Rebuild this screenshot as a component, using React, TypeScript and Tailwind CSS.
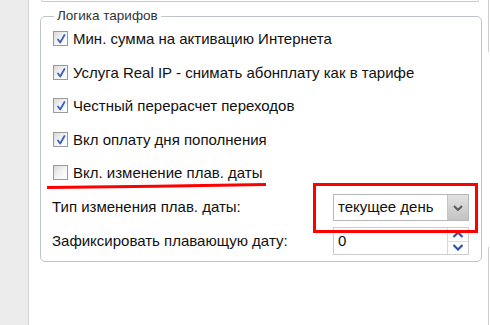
import React from "react";

const font = { fontFamily: '"Liberation Sans", Arial, sans-serif' };

function Check({ checked }: { checked: boolean }) {
  return (
    <span className="relative inline-block w-[15px] h-[15px] border border-[#9a9a9a] bg-gradient-to-br from-[#d9d9d9] via-[#f4f4f4] to-[#ffffff] shrink-0">
      {checked && (
        <svg className="absolute left-[1px] top-[1px]" width="12" height="12" viewBox="0 0 12 12">
          <path d="M3 6.5 L5.2 9.5 L9.5 2" fill="none" stroke="#3f5fbf" strokeWidth="1.8" strokeLinecap="round" strokeLinejoin="round" />
        </svg>
      )}
    </span>
  );
}

const rows = [
  { label: "Мин. сумма на активацию Интернета", checked: true },
  { label: "Услуга Real IP - снимать абонплату как в тарифе", checked: true },
  { label: "Честный перерасчет переходов", checked: true },
  { label: "Вкл оплату дня пополнения", checked: true },
  { label: "Вкл. изменение плав. даты", checked: false },
];

export default function App() {
  return (
    <div className="relative w-[490px] h-[325px] overflow-hidden bg-white flex text-[#111]" style={font}>
      <div className="w-[29px] h-full bg-[#ececec] border-r border-[#d4d4d4] shrink-0" />
      <div className="relative flex-1">
        {/* bottom of panel above */}
        <div className="ml-[12px] mr-[11px] h-[2px] border-b border-l border-r border-[#c6c8d4] rounded-b-[4px]" />

        <fieldset className="mt-[7px] ml-[11px] w-[442px] h-[253px] border border-[#bfc2cf] rounded-[5px] px-[12px] pb-0 pt-0">
          <legend className="ml-[1px] px-[3px] text-[13.5px] text-[#333] leading-[14px]">Логика тарифов</legend>
          <div className="flex flex-col gap-[18.5px] mt-[8px]">
            {rows.map((r) => (
              <div key={r.label} className="flex items-center gap-[5px] h-[15px] text-[15px]">
                <Check checked={r.checked} />
                <span className="leading-[15px]">{r.label}</span>
              </div>
            ))}
          </div>
          <div className="mt-[14px] flex items-center justify-between h-[27px] text-[15px]">
            <span className="ml-[-1px]">Тип изменения плав. даты:</span>
            <div className="flex w-[136px] h-[27px] border border-[#b7b7b7] mr-[0px]">
              <span className="flex-1 flex items-center pl-[4px] text-[15px]">текущее день</span>
              <span className="w-[21px] h-full border-l border-[#c4c4c4] bg-gradient-to-b from-[#e2e2e2] to-[#c3c3c3] flex items-center justify-center">
                <svg width="10" height="6" viewBox="0 0 10 6">
                  <path d="M1 1 L5 5 L9 1" fill="none" stroke="#5a5a5a" strokeWidth="2" />
                </svg>
              </span>
            </div>
          </div>
          <div className="mt-[6px] flex items-center justify-between h-[28px] text-[15px]">
            <span className="ml-[-1px]">Зафиксировать плавающую дату:</span>
            <div className="flex w-[136px] h-[28px] border border-[#cdcdcd]">
              <span className="flex-1 pl-[4px] pt-[2px] text-[15px]">0</span>
              <span className="w-[21px] h-full border-l border-[#d8d8d8] flex flex-col">
                <span className="flex-1 flex items-center justify-center border-b border-[#e0e0e0]">
                  <svg width="12" height="7" viewBox="0 0 12 7">
                    <path d="M1.5 6 L6 1.5 L10.5 6" fill="none" stroke="#2f52a8" strokeWidth="2.2" />
                  </svg>
                </span>
                <span className="flex-1 flex items-center justify-center">
                  <svg width="12" height="7" viewBox="0 0 12 7">
                    <path d="M1.5 1 L6 5.5 L10.5 1" fill="none" stroke="#2f52a8" strokeWidth="2.2" />
                  </svg>
                </span>
              </span>
            </div>
          </div>
        </fieldset>

        {/* right-side panel edges */}
        <div className="absolute right-[1px] top-0 h-[52px] w-px bg-[#cfcfcf]" />
        <div className="absolute right-[1px] top-[247px] bottom-0 w-px bg-[#cfcfcf]" />

        {/* red annotations */}
        <svg className="absolute left-[17px] top-[182px]" width="222" height="8" viewBox="0 0 222 8">
          <path d="M1 5.5 Q 110 4.5 220 2.5" fill="none" stroke="#ff0000" strokeWidth="3" />
        </svg>
        <div className="absolute left-[284px] top-[183px] w-[165px] h-[50px] border-[3px] border-[#ff0000]" />
      </div>
    </div>
  );
}
